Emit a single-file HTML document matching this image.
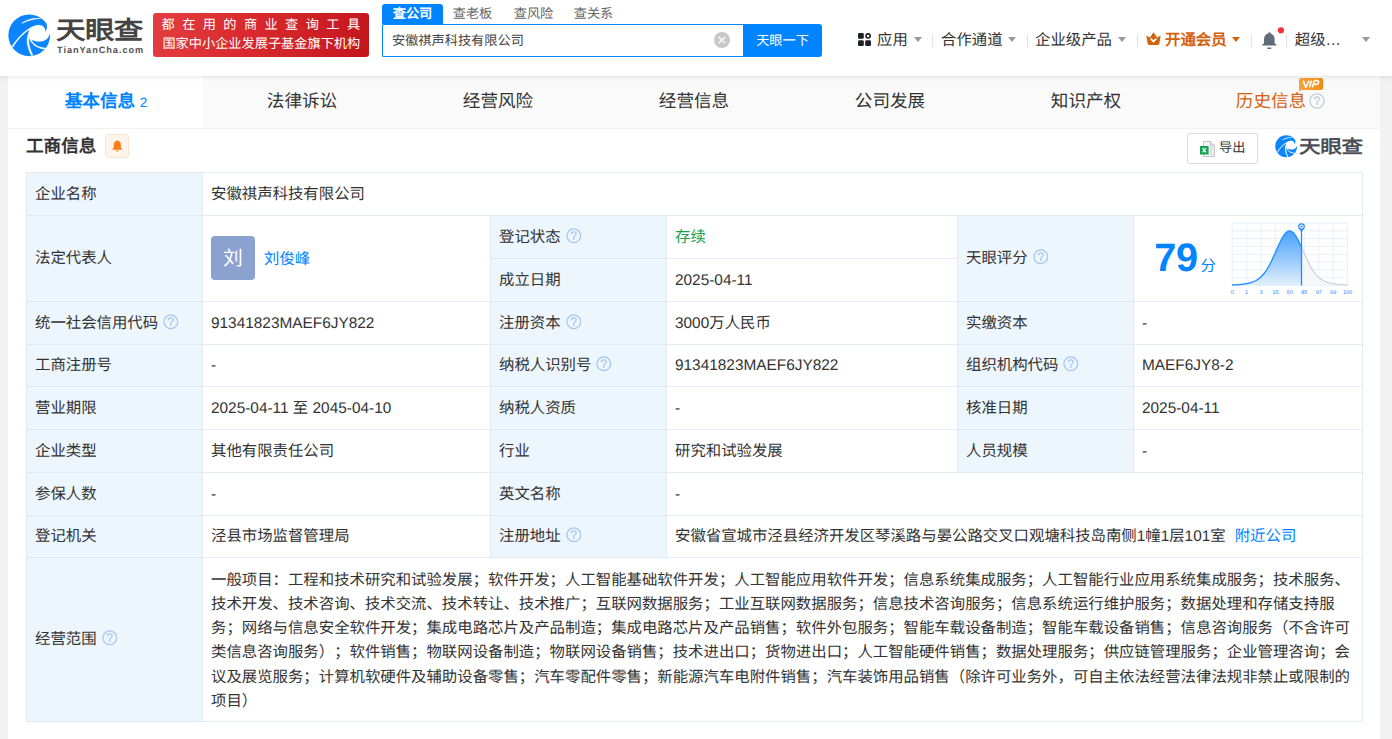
<!DOCTYPE html>
<html lang="zh-CN">
<head>
<meta charset="utf-8">
<title>安徽祺声科技有限公司 - 天眼查</title>
<style>
*{box-sizing:border-box;margin:0;padding:0}
html,body{width:1392px;height:739px;overflow:hidden}
body{text-rendering:geometricPrecision;text-spacing-trim:space-all;font-family:"Liberation Sans",sans-serif;background:#f2f2f2;color:#333;position:relative;font-size:15.4px}
a{color:#0084ff;text-decoration:none}
.abs{position:absolute}
/* ---------- header ---------- */
#hdr{position:absolute;left:0;top:0;width:1392px;height:76px;background:#fff;box-shadow:0 1px 5px rgba(0,0,0,.10);z-index:5}
#logo-mark{position:absolute;left:4px;top:10px;width:52px;height:52px}
#logo-cn{position:absolute;left:56px;top:12.8px;transform:scaleY(.85);transform-origin:50% 50%;font-size:29.5px;font-weight:bold;color:#444;letter-spacing:-.6px;line-height:36px;white-space:nowrap}
#logo-en{position:absolute;left:57px;top:44.2px;font-size:9.2px;font-weight:bold;color:#555;letter-spacing:.95px;line-height:12px;white-space:nowrap}
#slogan{position:absolute;left:153px;top:13px;width:216px;height:44px;border-radius:3px;background:linear-gradient(100deg,#e23d40 0%,#d9292e 45%,#c3161c 100%);color:#fff;font-size:13.2px;line-height:18.6px;padding:3px 0 0 0;text-align:left;white-space:nowrap;overflow:hidden}
#slogan .l1{letter-spacing:7.4px;padding-left:8.6px;display:block;height:18.6px}
#slogan .l2{display:block;height:18.6px;padding-left:9.4px}
/* search */
#stabs{position:absolute;left:382px;top:4px;height:20px;font-size:13.2px;line-height:20px;color:#666;white-space:nowrap}
#stabs span{position:absolute;top:0;height:20px;width:61px;text-align:center}
#stabs .on{background:#0084ff;color:#fff;border-radius:3px 3px 0 0;font-weight:bold}
#sbox{position:absolute;left:382px;top:24px;width:362px;height:33px;border:1px solid #0084ff;border-right:none;border-radius:2px 0 0 2px;background:#fff;font-size:13.2px;line-height:31px;padding-left:9px;color:#444;white-space:nowrap}
#sclear{position:absolute;left:714px;top:32px;width:16px;height:16px}
#sbtn{position:absolute;left:743px;top:24px;width:79px;height:33px;background:#0084ff;color:#fff;border-radius:0 3px 3px 0;font-size:13.2px;line-height:33px;text-align:center;white-space:nowrap}
/* nav */
.nv{position:absolute;top:30px;height:22px;line-height:22px;font-size:15.4px;color:#333;white-space:nowrap}
.sep{position:absolute;top:33.5px;width:1px;height:13px;background:#dfe3e8}
.caret{position:absolute;top:36.5px;margin-left:.5px;width:0;height:0;border-left:4.2px solid transparent;border-right:4.2px solid transparent;border-top:5px solid #999}
/* ---------- main ---------- */
#main{position:absolute;left:8px;top:76px;width:1372px;height:663px;background:#fff}
#tabs{position:absolute;left:0;top:0;width:1372px;height:53px;background:#fafafa;border-bottom:1px solid #f2f2f2}
.tab{position:absolute;top:0;width:196px;height:52px;line-height:50px;text-align:center;font-size:17.6px;color:#333;white-space:nowrap}
.tab.on{background:#fff;color:#0084ff;font-weight:bold}
.tab.on i{font-style:normal;font-weight:normal;font-size:13.6px;margin-left:4.5px}
.tab.vip{color:#d5620f;padding-right:3px}
/* section title */
#sect{position:absolute;left:26px;top:132.8px;font-size:17.6px;font-weight:bold;color:#333;line-height:26px;white-space:nowrap}
#sbell{position:absolute;left:105px;top:134px;width:24px;height:24px;border:1px solid #fde3cd;background:#fff4ea;border-radius:3px}
#export{position:absolute;left:1187px;top:133px;width:71px;height:31px;border:1px solid #dcdcdc;border-radius:2px;background:#fff;font-size:13.2px;line-height:27.4px;color:#333;padding-left:31px;white-space:nowrap}
/* ---------- table ---------- */
#tb{position:absolute;left:26px;top:172px;width:1337px;height:550px;background:#fff;border:1px solid #e1ebf6}
.c{position:absolute;border-right:1px solid #e1ebf6;border-bottom:1px solid #e1ebf6;padding-top:1px;font-size:15.4px;line-height:22px;color:#333;white-space:nowrap;display:flex;align-items:center;padding-left:8px}
.c.l{background:#edf5fd;padding-left:8px}
.q{display:inline-block;width:15.6px;height:15.6px;margin-left:5px;flex:none;position:relative;top:-1.8px}
.av{display:inline-block;width:44px;height:44px;border-radius:4px;background:#8ba1cf;color:#fff;font-size:19.8px;line-height:46.6px;text-align:center;margin-right:9px;margin-left:0;margin-top:-2px;flex:none}
.scope{line-height:24.2px;white-space:nowrap;text-spacing-trim:space-all;font-kerning:none;position:relative;top:1.3px;left:0}
#score{position:absolute;left:0;top:0;width:100%;height:100%}
.n79{position:absolute;left:20.3px;top:20.4px;font-size:39.6px;font-weight:bold;color:#0084ff;line-height:44px;letter-spacing:-.3px}
.fen{position:absolute;left:66.5px;top:40.2px;font-size:15.4px;color:#0084ff;line-height:22px}
.nm{position:relative;top:.9px}
</style>
</head>
<body>
<div id="hdr">
<svg id="logo-mark" viewBox="0 0 739 739">
<circle cx="358.5" cy="360" r="296.5" fill="#0a84ff"/>
<path d="M375 252 C420 215 490 200 540 222 C575 240 590 275 590 312 C605 285 618 250 606 200 L700 200 L700 338 L652 338 C640 395 595 440 530 448 C470 454 425 442 396 428 C372 410 357 385 356 360 C353 320 362 280 375 252Z" fill="#fff"/>
<path d="M386 247 C300 288 188 395 110 520 L127 530 C200 405 300 312 372 272Z" fill="#fff" stroke="#fff" stroke-width="5" stroke-linejoin="round"/>
<path d="M374 262 C340 330 322 400 328 462 C336 532 362 592 390 650 L412 644 C386 588 360 528 354 462 C350 420 352 390 358 362Z" fill="#fff" stroke="#fff" stroke-width="5" stroke-linejoin="round"/>
<path d="M352 372 C362 450 440 545 580 556 L586 540 C470 532 400 470 390 420Z" fill="#fff" stroke="#fff" stroke-width="5" stroke-linejoin="round"/>
<path d="M252 184 C330 135 430 106 522 122 C440 124 340 150 262 190Z" fill="#fff" stroke="#fff" stroke-width="5" stroke-linejoin="round"/>
</svg>
<div id="logo-cn">天眼查</div>
<div id="logo-en">TianYanCha.com</div>
<div id="slogan"><span class="l1">都在用的商业查询工具</span><span class="l2">国家中小企业发展子基金旗下机构</span></div>
<div id="stabs"><span class="on" style="left:0">查公司</span><span style="left:60px">查老板</span><span style="left:121px">查风险</span><span style="left:181px">查关系</span></div>
<div id="sbox">安徽祺声科技有限公司</div>
<svg id="sclear" viewBox="0 0 16 16"><circle cx="8" cy="8" r="8" fill="#c8c8c8"/><path d="M5.2 5.2L10.8 10.8M10.8 5.2L5.2 10.8" stroke="#fff" stroke-width="1.4" stroke-linecap="round"/></svg>
<div id="sbtn">天眼一下</div>
<svg class="abs" style="left:858px;top:33px;width:13px;height:13px" viewBox="0 0 13 13"><rect x="0" y="0" width="5.8" height="5.8" rx="1.3" fill="#1e2128"/><circle cx="10.1" cy="2.9" r="2.1" fill="none" stroke="#1e2128" stroke-width="1.7"/><rect x="0" y="7.2" width="5.8" height="5.8" rx="1.3" fill="#1e2128"/><rect x="7.2" y="7.2" width="5.8" height="5.8" rx="1.3" fill="#1e2128"/></svg>
<div class="nv" style="left:877px">应用</div><div class="caret" style="left:913px"></div>
<div class="sep" style="left:932px"></div>
<div class="nv" style="left:941px">合作通道</div><div class="caret" style="left:1007px"></div>
<div class="sep" style="left:1027px"></div>
<div class="nv" style="left:1035px">企业级产品</div><div class="caret" style="left:1117px"></div>
<div class="sep" style="left:1137px"></div>
<svg class="abs" style="left:1146px;top:32px;width:15px;height:14px" viewBox="0 0 15 14"><path d="M0.3 3.6 L3.9 5.6 L7.5 0.2 L11.1 5.6 L14.7 3.6 L13.4 11.6 Q13.2 13 11.8 13 L3.2 13 Q1.8 13 1.6 11.6 Z" fill="#d2640c"/><path d="M4.7 6.6 L7.5 9.6 L10.3 6.6" fill="none" stroke="#fff" stroke-width="1.7" stroke-linejoin="miter"/></svg>
<div class="nv" style="left:1165px;color:#d4620c;font-weight:bold">开通会员</div><div class="caret" style="left:1231px;border-top-color:#d4620c"></div>
<div class="sep" style="left:1251px"></div>
<svg class="abs" style="left:1260px;top:26px;width:26px;height:25px" viewBox="0 0 26 25"><path d="M9.2 6.2 C8.6 6.2 8.3 6.6 8.3 7.2 C5.6 8 4 10.4 4 13.4 L4 17.6 L2.2 18.6 L2.2 19.6 L16.4 19.6 L16.4 18.6 L14.6 17.6 L14.6 13.4 C14.6 10.4 13 8 10.3 7.2 C10.3 6.6 10 6.2 9.2 6.2Z" fill="#626b78"/><rect x="7.2" y="21.6" width="4.2" height="1.3" rx=".6" fill="#626b78"/><circle cx="20.9" cy="4.3" r="3.1" fill="#fb2d3b"/></svg>
<div class="sep" style="left:1286px"></div>
<div class="nv" style="left:1294.8px">超级…</div><div class="caret" style="left:1361px"></div>
</div>
<div id="main">
<div id="tabs">
<div class="tab on" style="left:0;width:195.3px;padding-left:.7px">基本信息<i>2</i></div>
<div class="tab" style="left:196px">法律诉讼</div>
<div class="tab" style="left:392px">经营风险</div>
<div class="tab" style="left:588px">经营信息</div>
<div class="tab" style="left:784px">公司发展</div>
<div class="tab" style="left:980px">知识产权</div>
<div class="tab vip" style="left:1176px">历史信息<svg style="width:16px;height:16px;vertical-align:-2px;margin-left:3px" viewBox="0 0 16 16"><circle cx="8" cy="8" r="7.1" fill="none" stroke="#c6ced8" stroke-width="1.4"/><path d="M5.6 6.2 C5.6 4.8 6.6 4 8 4 C9.4 4 10.4 4.9 10.4 6.1 C10.4 7.7 8 7.8 8 9.6 L8 12" fill="none" stroke="#c6ced8" stroke-width="1.4"/></svg></div>
<svg class="abs" style="left:1291px;top:2px;width:25px;height:14px" viewBox="0 0 25 14"><defs><linearGradient id="vg" x1="0" y1="0" x2="1" y2="0"><stop offset="0" stop-color="#f6a040"/><stop offset=".5" stop-color="#fb9a25"/><stop offset="1" stop-color="#f08a1a"/></linearGradient></defs><path d="M2.2 0 H22 A2.2 2.2 0 0 1 24.2 2.2 V9.7 A2.2 2.2 0 0 1 22 11.9 H2.6 L0 13.6 V2.2 A2.2 2.2 0 0 1 2.2 0Z" fill="url(#vg)"/><path d="M4.2 2.6 L6.8 9.4 L10.2 2.6 M12.4 2.6 L10.6 9.4 M15.2 2.6 L13.4 9.4 M15.2 2.6 H18.2 C20.4 2.6 20 6.4 17.6 6.4 H14.4" fill="none" stroke="#fff" stroke-width="1.6" stroke-linejoin="round"/></svg>
</div>
</div>
<div id="sect">工商信息</div>
<div id="sbell"><svg style="position:absolute;left:5.6px;top:5.2px;width:10.6px;height:12.4px" viewBox="0 0 12 14"><path d="M6 0.6 C3.4 0.9 2 3 2 5.4 L2 8.6 L0.6 10.2 L0.6 11 L11.4 11 L11.4 10.2 L10 8.6 L10 5.4 C10 3 8.6 0.9 6 0.6Z" fill="#ff7d18"/><path d="M4.2 12 A1.9 1.9 0 0 0 7.8 12Z" fill="#ff7d18"/></svg></div>
<div id="export"><svg style="position:absolute;left:12px;top:7px;width:15px;height:16px" viewBox="0 0 15 16"><path d="M3.4 0.5 H10.4 L14.4 4.4 V15.5 H3.4Z" fill="#f4f4f4" stroke="#b9bfc6" stroke-width=".9"/><path d="M10.4 0.5 V4.4 H14.4" fill="#dfe3e7" stroke="#b9bfc6" stroke-width=".9"/><path d="M9.6 6.6H12.6M9.6 8.8H12.6M9.6 11H12.6M9.6 13.2H12.6" stroke="#c2c8ce" stroke-width=".9"/><rect x="0" y="5" width="8.6" height="8.6" rx=".6" fill="#13a24f"/><path d="M2.6 7.2 L6 11.4 M6 7.2 L2.6 11.4" stroke="#fff" stroke-width="1.3"/></svg>导出</div>
<svg class="abs" style="left:1273.1px;top:132.9px;width:27.2px;height:27.2px" viewBox="0 0 739 739">
<circle cx="358.5" cy="360" r="296.5" fill="#0a84ff"/>
<path d="M375 252 C420 215 490 200 540 222 C575 240 590 275 590 312 C605 285 618 250 606 200 L700 200 L700 338 L652 338 C640 395 595 440 530 448 C470 454 425 442 396 428 C372 410 357 385 356 360 C353 320 362 280 375 252Z" fill="#fff"/>
<path d="M386 247 C300 288 188 395 110 520 L127 530 C200 405 300 312 372 272Z" fill="#fff" stroke="#fff" stroke-width="5" stroke-linejoin="round"/>
<path d="M374 262 C340 330 322 400 328 462 C336 532 362 592 390 650 L412 644 C386 588 360 528 354 462 C350 420 352 390 358 362Z" fill="#fff" stroke="#fff" stroke-width="5" stroke-linejoin="round"/>
<path d="M352 372 C362 450 440 545 580 556 L586 540 C470 532 400 470 390 420Z" fill="#fff" stroke="#fff" stroke-width="5" stroke-linejoin="round"/>
<path d="M252 184 C330 135 430 106 522 122 C440 124 340 150 262 190Z" fill="#fff" stroke="#fff" stroke-width="5" stroke-linejoin="round"/>
</svg>
<div class="abs" id="wm" style="left:1299px;top:134px;font-size:21.6px;font-weight:bold;color:#4d5157;line-height:26px;letter-spacing:-.4px;transform:scaleY(.85);white-space:nowrap">天眼查</div>
<div id="tb">
<div class="c l" style="left:0px;top:0px;width:176px;height:43px;">企业名称</div>
<div class="c" style="left:176px;top:0px;width:1160px;height:43px;">安徽祺声科技有限公司</div>
<div class="c l" style="left:0px;top:43px;width:176px;height:86px;">法定代表人</div>
<div class="c" style="left:176px;top:43px;width:288px;height:86px;"><span class="av">刘</span><a class="nm">刘俊峰</a></div>
<div class="c l" style="left:464px;top:43px;width:176px;height:43px;">登记状态<svg class="q" viewBox="0 0 15 15"><circle cx="7.5" cy="7.5" r="6.6" fill="none" stroke="#a3c8f0" stroke-width="1.2"/><path d="M5.2 5.9 C5.2 4.5 6.2 3.7 7.5 3.7 C8.8 3.7 9.8 4.5 9.8 5.7 C9.8 7.3 7.5 7.4 7.5 9.2 L7.5 11.6" fill="none" stroke="#a3c8f0" stroke-width="1.2"/></svg></div>
<div class="c" style="left:640px;top:43px;width:291px;height:43px;"><span style="color:#13a04f">存续</span></div>
<div class="c l" style="left:464px;top:86px;width:176px;height:43px;">成立日期</div>
<div class="c" style="left:640px;top:86px;width:291px;height:43px;">2025-04-11</div>
<div class="c l" style="left:931px;top:43px;width:176px;height:86px;">天眼评分<svg class="q" viewBox="0 0 15 15"><circle cx="7.5" cy="7.5" r="6.6" fill="none" stroke="#a3c8f0" stroke-width="1.2"/><path d="M5.2 5.9 C5.2 4.5 6.2 3.7 7.5 3.7 C8.8 3.7 9.8 4.5 9.8 5.7 C9.8 7.3 7.5 7.4 7.5 9.2 L7.5 11.6" fill="none" stroke="#a3c8f0" stroke-width="1.2"/></svg></div>
<div class="c" style="left:1107px;top:43px;width:229px;height:86px;"><div id="score"><span class="n79">79</span><span class="fen">分</span><svg style="position:absolute;left:91px;top:2px;width:140px;height:82px" viewBox="0 0 140 82" font-family="Liberation Sans, sans-serif" font-size="5.5" fill="#1e88ff"><defs><linearGradient id="cg" x1="0" y1="0" x2="0" y2="1"><stop offset="0" stop-color="#4aa3ff"/><stop offset=".45" stop-color="#8cc3fb"/><stop offset="1" stop-color="#e2effc"/></linearGradient></defs><path d="M7.20 5.00V67.50" stroke="#e6f0fb" stroke-width="1"/><path d="M21.62 5.00V67.50" stroke="#e6f0fb" stroke-width="1"/><path d="M36.05 5.00V67.50" stroke="#e6f0fb" stroke-width="1"/><path d="M50.47 5.00V67.50" stroke="#e6f0fb" stroke-width="1"/><path d="M64.90 5.00V67.50" stroke="#e6f0fb" stroke-width="1"/><path d="M79.33 5.00V67.50" stroke="#e6f0fb" stroke-width="1"/><path d="M93.75 5.00V67.50" stroke="#e6f0fb" stroke-width="1"/><path d="M108.17 5.00V67.50" stroke="#e6f0fb" stroke-width="1"/><path d="M122.60 5.00V67.50" stroke="#e6f0fb" stroke-width="1"/><path d="M7.20 5.00H122.60" stroke="#e6f0fb" stroke-width="1"/><path d="M7.20 12.81H122.60" stroke="#e6f0fb" stroke-width="1"/><path d="M7.20 20.62H122.60" stroke="#e6f0fb" stroke-width="1"/><path d="M7.20 28.44H122.60" stroke="#e6f0fb" stroke-width="1"/><path d="M7.20 36.25H122.60" stroke="#e6f0fb" stroke-width="1"/><path d="M7.20 44.06H122.60" stroke="#e6f0fb" stroke-width="1"/><path d="M7.20 51.88H122.60" stroke="#e6f0fb" stroke-width="1"/><path d="M7.20 59.69H122.60" stroke="#e6f0fb" stroke-width="1"/><path d="M7.20 67.50H122.60" stroke="#e6f0fb" stroke-width="1"/><path d="M76.50 29.27 L77.00 30.39 L77.50 31.52 L78.00 32.66 L78.50 33.79 L79.00 34.92 L79.50 36.05 L80.00 37.17 L80.50 38.28 L81.00 39.38 L81.50 40.47 L82.00 41.53 L82.50 42.58 L83.00 43.61 L83.50 44.61 L84.00 45.59 L84.50 46.55 L85.00 47.48 L85.50 48.39 L86.00 49.27 L86.50 50.12 L87.00 50.94 L87.50 51.73 L88.00 52.50 L88.50 53.23 L89.00 53.94 L89.50 54.62 L90.00 55.27 L90.50 55.90 L91.00 56.49 L91.50 57.06 L92.00 57.61 L92.50 58.12 L93.00 58.62 L93.50 59.09 L94.00 59.53 L94.50 59.96 L95.00 60.36 L95.50 60.74 L96.00 61.10 L96.50 61.45 L97.00 61.77 L97.50 62.08 L98.00 62.37 L98.50 62.64 L99.00 62.90 L99.50 63.14 L100.00 63.38 L100.50 63.59 L101.00 63.80 L101.50 63.99 L102.00 64.18 L102.50 64.35 L103.00 64.52 L103.50 64.67 L104.00 64.82 L104.50 64.95 L105.00 65.08 L105.50 65.21 L106.00 65.32 L106.50 65.43 L107.00 65.54 L107.50 65.63 L108.00 65.73 L108.50 65.81 L109.00 65.90 L109.50 65.98 L110.00 66.05 L110.50 66.12 L111.00 66.19 L111.50 66.25 L112.00 66.31 L112.50 66.37 L113.00 66.42 L113.50 66.47 L114.00 66.52 L114.50 66.56 L115.00 66.61 L115.50 66.65 L116.00 66.69 L116.50 66.72 L117.00 66.76 L117.50 66.79 L118.00 66.82 L118.50 66.85 L119.00 66.88 L119.50 66.90 L120.00 66.93 L120.50 66.95 L121.00 66.97 L121.50 66.99 L122.00 67.01 L122.50 67.03 L122.60 67.30 L76.50 67.30Z" fill="#f4f5f7" opacity=".8"/><path d="M76.50 29.27 L77.00 30.39 L77.50 31.52 L78.00 32.66 L78.50 33.79 L79.00 34.92 L79.50 36.05 L80.00 37.17 L80.50 38.28 L81.00 39.38 L81.50 40.47 L82.00 41.53 L82.50 42.58 L83.00 43.61 L83.50 44.61 L84.00 45.59 L84.50 46.55 L85.00 47.48 L85.50 48.39 L86.00 49.27 L86.50 50.12 L87.00 50.94 L87.50 51.73 L88.00 52.50 L88.50 53.23 L89.00 53.94 L89.50 54.62 L90.00 55.27 L90.50 55.90 L91.00 56.49 L91.50 57.06 L92.00 57.61 L92.50 58.12 L93.00 58.62 L93.50 59.09 L94.00 59.53 L94.50 59.96 L95.00 60.36 L95.50 60.74 L96.00 61.10 L96.50 61.45 L97.00 61.77 L97.50 62.08 L98.00 62.37 L98.50 62.64 L99.00 62.90 L99.50 63.14 L100.00 63.38 L100.50 63.59 L101.00 63.80 L101.50 63.99 L102.00 64.18 L102.50 64.35 L103.00 64.52 L103.50 64.67 L104.00 64.82 L104.50 64.95 L105.00 65.08 L105.50 65.21 L106.00 65.32 L106.50 65.43 L107.00 65.54 L107.50 65.63 L108.00 65.73 L108.50 65.81 L109.00 65.90 L109.50 65.98 L110.00 66.05 L110.50 66.12 L111.00 66.19 L111.50 66.25 L112.00 66.31 L112.50 66.37 L113.00 66.42 L113.50 66.47 L114.00 66.52 L114.50 66.56 L115.00 66.61 L115.50 66.65 L116.00 66.69 L116.50 66.72 L117.00 66.76 L117.50 66.79 L118.00 66.82 L118.50 66.85 L119.00 66.88 L119.50 66.90 L120.00 66.93 L120.50 66.95 L121.00 66.97 L121.50 66.99 L122.00 67.01 L122.50 67.03" fill="none" stroke="#c3cfdc" stroke-width="1.1"/><path d="M7.00 67.02 L7.50 67.00 L8.00 66.98 L8.50 66.96 L9.00 66.94 L9.50 66.91 L10.00 66.89 L10.50 66.86 L11.00 66.83 L11.50 66.80 L12.00 66.77 L12.50 66.74 L13.00 66.70 L13.50 66.66 L14.00 66.62 L14.50 66.58 L15.00 66.54 L15.50 66.49 L16.00 66.44 L16.50 66.39 L17.00 66.33 L17.50 66.27 L18.00 66.21 L18.50 66.15 L19.00 66.08 L19.50 66.01 L20.00 65.93 L20.50 65.85 L21.00 65.76 L21.50 65.67 L22.00 65.58 L22.50 65.47 L23.00 65.37 L23.50 65.25 L24.00 65.13 L24.50 65.01 L25.00 64.87 L25.50 64.73 L26.00 64.58 L26.50 64.42 L27.00 64.25 L27.50 64.07 L28.00 63.88 L28.50 63.68 L29.00 63.46 L29.50 63.24 L30.00 63.00 L30.50 62.75 L31.00 62.48 L31.50 62.19 L32.00 61.89 L32.50 61.58 L33.00 61.24 L33.50 60.89 L34.00 60.51 L34.50 60.12 L35.00 59.71 L35.50 59.27 L36.00 58.81 L36.50 58.32 L37.00 57.82 L37.50 57.28 L38.00 56.72 L38.50 56.14 L39.00 55.52 L39.50 54.88 L40.00 54.22 L40.50 53.52 L41.00 52.80 L41.50 52.04 L42.00 51.26 L42.50 50.45 L43.00 49.61 L43.50 48.74 L44.00 47.85 L44.50 46.93 L45.00 45.98 L45.50 45.01 L46.00 44.01 L46.50 42.99 L47.00 41.95 L47.50 40.89 L48.00 39.82 L48.50 38.72 L49.00 37.62 L49.50 36.50 L50.00 35.38 L50.50 34.24 L51.00 33.11 L51.50 31.97 L52.00 30.84 L52.50 29.72 L53.00 28.60 L53.50 27.50 L54.00 26.41 L54.50 25.34 L55.00 24.29 L55.50 23.27 L56.00 22.28 L56.50 21.33 L57.00 20.41 L57.50 19.53 L58.00 18.70 L58.50 17.91 L59.00 17.17 L59.50 16.48 L60.00 15.85 L60.50 15.28 L61.00 14.77 L61.50 14.32 L62.00 13.93 L62.50 13.61 L63.00 13.35 L63.50 13.17 L64.00 13.05 L64.50 13.00 L65.00 13.02 L65.50 13.11 L66.00 13.27 L66.50 13.50 L67.00 13.79 L67.50 14.15 L68.00 14.58 L68.50 15.07 L69.00 15.62 L69.50 16.23 L70.00 16.89 L70.50 17.61 L71.00 18.38 L71.50 19.19 L72.00 20.05 L72.50 20.96 L73.00 21.90 L73.50 22.87 L74.00 23.88 L74.50 24.92 L75.00 25.98 L75.50 27.06 L76.00 28.16 L76.50 29.27 L76.50 67.30 L7.20 67.30Z" fill="url(#cg)"/><path d="M7.00 67.02 L7.50 67.00 L8.00 66.98 L8.50 66.96 L9.00 66.94 L9.50 66.91 L10.00 66.89 L10.50 66.86 L11.00 66.83 L11.50 66.80 L12.00 66.77 L12.50 66.74 L13.00 66.70 L13.50 66.66 L14.00 66.62 L14.50 66.58 L15.00 66.54 L15.50 66.49 L16.00 66.44 L16.50 66.39 L17.00 66.33 L17.50 66.27 L18.00 66.21 L18.50 66.15 L19.00 66.08 L19.50 66.01 L20.00 65.93 L20.50 65.85 L21.00 65.76 L21.50 65.67 L22.00 65.58 L22.50 65.47 L23.00 65.37 L23.50 65.25 L24.00 65.13 L24.50 65.01 L25.00 64.87 L25.50 64.73 L26.00 64.58 L26.50 64.42 L27.00 64.25 L27.50 64.07 L28.00 63.88 L28.50 63.68 L29.00 63.46 L29.50 63.24 L30.00 63.00 L30.50 62.75 L31.00 62.48 L31.50 62.19 L32.00 61.89 L32.50 61.58 L33.00 61.24 L33.50 60.89 L34.00 60.51 L34.50 60.12 L35.00 59.71 L35.50 59.27 L36.00 58.81 L36.50 58.32 L37.00 57.82 L37.50 57.28 L38.00 56.72 L38.50 56.14 L39.00 55.52 L39.50 54.88 L40.00 54.22 L40.50 53.52 L41.00 52.80 L41.50 52.04 L42.00 51.26 L42.50 50.45 L43.00 49.61 L43.50 48.74 L44.00 47.85 L44.50 46.93 L45.00 45.98 L45.50 45.01 L46.00 44.01 L46.50 42.99 L47.00 41.95 L47.50 40.89 L48.00 39.82 L48.50 38.72 L49.00 37.62 L49.50 36.50 L50.00 35.38 L50.50 34.24 L51.00 33.11 L51.50 31.97 L52.00 30.84 L52.50 29.72 L53.00 28.60 L53.50 27.50 L54.00 26.41 L54.50 25.34 L55.00 24.29 L55.50 23.27 L56.00 22.28 L56.50 21.33 L57.00 20.41 L57.50 19.53 L58.00 18.70 L58.50 17.91 L59.00 17.17 L59.50 16.48 L60.00 15.85 L60.50 15.28 L61.00 14.77 L61.50 14.32 L62.00 13.93 L62.50 13.61 L63.00 13.35 L63.50 13.17 L64.00 13.05 L64.50 13.00 L65.00 13.02 L65.50 13.11 L66.00 13.27 L66.50 13.50 L67.00 13.79 L67.50 14.15 L68.00 14.58 L68.50 15.07 L69.00 15.62 L69.50 16.23 L70.00 16.89 L70.50 17.61 L71.00 18.38 L71.50 19.19 L72.00 20.05 L72.50 20.96 L73.00 21.90 L73.50 22.87 L74.00 23.88 L74.50 24.92 L75.00 25.98 L75.50 27.06 L76.00 28.16 L76.50 29.27" fill="none" stroke="#1e8cff" stroke-width="1.3"/><path d="M76.50 11.00V67.50" stroke="#1e8cff" stroke-width="1.3"/><path d="M73.10 8.60 A3.4 3.4 0 1 1 79.90 8.60 C79.90 11.00 77.30 12.40 76.50 14.20 C75.70 12.40 73.10 11.00 73.10 8.60Z" fill="#1e8cff"/><circle cx="76.50" cy="8.60" r="2.1" fill="#fff"/><circle cx="76.50" cy="8.60" r="1.05" fill="#1e8cff"/><text x="7.20" y="75.60" text-anchor="middle">0</text><text x="21.62" y="75.60" text-anchor="middle">1</text><text x="36.05" y="75.60" text-anchor="middle">3</text><text x="50.47" y="75.60" text-anchor="middle">15</text><text x="64.90" y="75.60" text-anchor="middle">50</text><text x="79.33" y="75.60" text-anchor="middle">85</text><text x="93.75" y="75.60" text-anchor="middle">97</text><text x="108.17" y="75.60" text-anchor="middle">99</text><text x="122.60" y="75.60" text-anchor="middle">100</text></svg></div><!--/score--></div>
<div class="c l" style="left:0px;top:129px;width:176px;height:43px;">统一社会信用代码<svg class="q" viewBox="0 0 15 15"><circle cx="7.5" cy="7.5" r="6.6" fill="none" stroke="#a3c8f0" stroke-width="1.2"/><path d="M5.2 5.9 C5.2 4.5 6.2 3.7 7.5 3.7 C8.8 3.7 9.8 4.5 9.8 5.7 C9.8 7.3 7.5 7.4 7.5 9.2 L7.5 11.6" fill="none" stroke="#a3c8f0" stroke-width="1.2"/></svg></div>
<div class="c" style="left:176px;top:129px;width:288px;height:43px;">91341823MAEF6JY822</div>
<div class="c l" style="left:464px;top:129px;width:176px;height:43px;">注册资本<svg class="q" viewBox="0 0 15 15"><circle cx="7.5" cy="7.5" r="6.6" fill="none" stroke="#a3c8f0" stroke-width="1.2"/><path d="M5.2 5.9 C5.2 4.5 6.2 3.7 7.5 3.7 C8.8 3.7 9.8 4.5 9.8 5.7 C9.8 7.3 7.5 7.4 7.5 9.2 L7.5 11.6" fill="none" stroke="#a3c8f0" stroke-width="1.2"/></svg></div>
<div class="c" style="left:640px;top:129px;width:291px;height:43px;">3000万人民币</div>
<div class="c l" style="left:931px;top:129px;width:176px;height:43px;">实缴资本</div>
<div class="c" style="left:1107px;top:129px;width:229px;height:43px;">-</div>
<div class="c l" style="left:0px;top:172px;width:176px;height:42px;">工商注册号</div>
<div class="c" style="left:176px;top:172px;width:288px;height:42px;">-</div>
<div class="c l" style="left:464px;top:172px;width:176px;height:42px;">纳税人识别号<svg class="q" viewBox="0 0 15 15"><circle cx="7.5" cy="7.5" r="6.6" fill="none" stroke="#a3c8f0" stroke-width="1.2"/><path d="M5.2 5.9 C5.2 4.5 6.2 3.7 7.5 3.7 C8.8 3.7 9.8 4.5 9.8 5.7 C9.8 7.3 7.5 7.4 7.5 9.2 L7.5 11.6" fill="none" stroke="#a3c8f0" stroke-width="1.2"/></svg></div>
<div class="c" style="left:640px;top:172px;width:291px;height:42px;">91341823MAEF6JY822</div>
<div class="c l" style="left:931px;top:172px;width:176px;height:42px;">组织机构代码<svg class="q" viewBox="0 0 15 15"><circle cx="7.5" cy="7.5" r="6.6" fill="none" stroke="#a3c8f0" stroke-width="1.2"/><path d="M5.2 5.9 C5.2 4.5 6.2 3.7 7.5 3.7 C8.8 3.7 9.8 4.5 9.8 5.7 C9.8 7.3 7.5 7.4 7.5 9.2 L7.5 11.6" fill="none" stroke="#a3c8f0" stroke-width="1.2"/></svg></div>
<div class="c" style="left:1107px;top:172px;width:229px;height:42px;">MAEF6JY8-2</div>
<div class="c l" style="left:0px;top:214px;width:176px;height:43px;">营业期限</div>
<div class="c" style="left:176px;top:214px;width:288px;height:43px;">2025-04-11 至 2045-04-10</div>
<div class="c l" style="left:464px;top:214px;width:176px;height:43px;">纳税人资质</div>
<div class="c" style="left:640px;top:214px;width:291px;height:43px;">-</div>
<div class="c l" style="left:931px;top:214px;width:176px;height:43px;">核准日期</div>
<div class="c" style="left:1107px;top:214px;width:229px;height:43px;">2025-04-11</div>
<div class="c l" style="left:0px;top:257px;width:176px;height:43px;">企业类型</div>
<div class="c" style="left:176px;top:257px;width:288px;height:43px;">其他有限责任公司</div>
<div class="c l" style="left:464px;top:257px;width:176px;height:43px;">行业</div>
<div class="c" style="left:640px;top:257px;width:291px;height:43px;">研究和试验发展</div>
<div class="c l" style="left:931px;top:257px;width:176px;height:43px;">人员规模</div>
<div class="c" style="left:1107px;top:257px;width:229px;height:43px;">-</div>
<div class="c l" style="left:0px;top:300px;width:176px;height:43px;">参保人数</div>
<div class="c" style="left:176px;top:300px;width:288px;height:43px;">-</div>
<div class="c l" style="left:464px;top:300px;width:176px;height:43px;">英文名称</div>
<div class="c" style="left:640px;top:300px;width:696px;height:43px;">-</div>
<div class="c l" style="left:0px;top:343px;width:176px;height:42px;">登记机关</div>
<div class="c" style="left:176px;top:343px;width:288px;height:42px;">泾县市场监督管理局</div>
<div class="c l" style="left:464px;top:343px;width:176px;height:42px;">注册地址<svg class="q" viewBox="0 0 15 15"><circle cx="7.5" cy="7.5" r="6.6" fill="none" stroke="#a3c8f0" stroke-width="1.2"/><path d="M5.2 5.9 C5.2 4.5 6.2 3.7 7.5 3.7 C8.8 3.7 9.8 4.5 9.8 5.7 C9.8 7.3 7.5 7.4 7.5 9.2 L7.5 11.6" fill="none" stroke="#a3c8f0" stroke-width="1.2"/></svg></div>
<div class="c" style="left:640px;top:343px;width:696px;height:42px;">安徽省宣城市泾县经济开发区琴溪路与晏公路交叉口观塘科技岛南侧1幢1层101室<a style="margin-left:9px">附近公司</a></div>
<div class="c l" style="left:0px;top:385px;width:176px;height:164px;">经营范围<svg class="q" viewBox="0 0 15 15"><circle cx="7.5" cy="7.5" r="6.6" fill="none" stroke="#a3c8f0" stroke-width="1.2"/><path d="M5.2 5.9 C5.2 4.5 6.2 3.7 7.5 3.7 C8.8 3.7 9.8 4.5 9.8 5.7 C9.8 7.3 7.5 7.4 7.5 9.2 L7.5 11.6" fill="none" stroke="#a3c8f0" stroke-width="1.2"/></svg></div>
<div class="c" style="left:176px;top:385px;width:1160px;height:164px;"><div class="scope">一般项目：工程和技术研究和试验发展；软件开发；人工智能基础软件开发；人工智能应用软件开发；信息系统集成服务；人工智能行业应用系统集成服务；技术服务、<br>技术开发、技术咨询、技术交流、技术转让、技术推广；互联网数据服务；工业互联网数据服务；信息技术咨询服务；信息系统运行维护服务；数据处理和存储支持服<br>务；网络与信息安全软件开发；集成电路芯片及产品制造；集成电路芯片及产品销售；软件外包服务；智能车载设备制造；智能车载设备销售；信息咨询服务（不含许可<br>类信息咨询服务）；软件销售；物联网设备制造；物联网设备销售；技术进出口；货物进出口；人工智能硬件销售；数据处理服务；供应链管理服务；企业管理咨询；会<br>议及展览服务；计算机软硬件及辅助设备零售；汽车零配件零售；新能源汽车电附件销售；汽车装饰用品销售（除许可业务外，可自主依法经营法律法规非禁止或限制的<br>项目）</div></div>
</div><!--/tb-->
</body>
</html>
